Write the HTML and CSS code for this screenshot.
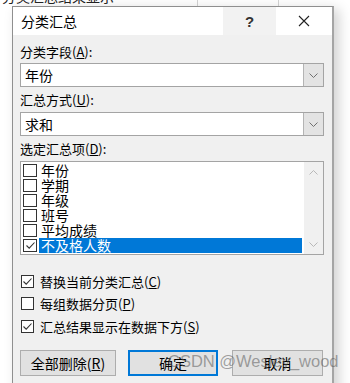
FILE: index.html
```html
<!DOCTYPE html>
<html lang="zh">
<head>
    <meta charset="UTF-8">
    <meta name="viewport" content="width=device-width, initial-scale=1.0">
    <title>分类汇总</title>
    <link rel="stylesheet" href="styles.css">
</head>
<body>
    <div class="sheet-top"><span class="cut-text">分类汇总结果显示</span></div>
    <div class="dialog">
        <div class="titlebar">
            <span class="title">分类汇总</span>
            <span class="title-btn help">?</span>
            <span class="title-btn close">
                <svg width="12" height="12" viewBox="0 0 12 12"><path d="M1 1 L11 11 M11 1 L1 11" stroke="#222" stroke-width="1.1" fill="none"/></svg>
            </span>
        </div>
        <div class="dialog-body">
            <div class="field-label">分类字段(<u>A</u>):</div>
            <div class="combo">
                <span class="combo-value">年份</span>
                <span class="combo-btn"><svg width="9" height="5" viewBox="0 0 9 5"><path d="M0.5 0.5 L4.5 4.5 L8.5 0.5" stroke="#707070" fill="none"/></svg></span>
            </div>

            <div class="field-label second">汇总方式(<u>U</u>):</div>
            <div class="combo">
                <span class="combo-value">求和</span>
                <span class="combo-btn"><svg width="9" height="5" viewBox="0 0 9 5"><path d="M0.5 0.5 L4.5 4.5 L8.5 0.5" stroke="#707070" fill="none"/></svg></span>
            </div>

            <div class="field-label second">选定汇总项(<u>D</u>):</div>
            <div class="listbox">
                <ul class="items">
                    <li class="item"><span class="box"></span><span class="item-text">年份</span></li>
                    <li class="item"><span class="box"></span><span class="item-text">学期</span></li>
                    <li class="item"><span class="box"></span><span class="item-text">年级</span></li>
                    <li class="item"><span class="box"></span><span class="item-text">班号</span></li>
                    <li class="item"><span class="box"></span><span class="item-text">平均成绩</span></li>
                    <li class="item selected">
                        <span class="box"><svg width="11" height="11" viewBox="0 0 11 11"><path d="M1.5 5.5 L4.2 8.2 L9.5 2.5" stroke="#333" stroke-width="1.1" fill="none"/></svg></span>
                        <span class="item-text">不及格人数</span>
                    </li>
                </ul>
                <div class="scrollbar">
                    <svg width="9" height="5" viewBox="0 0 9 5"><path d="M0.5 4.5 L4.5 0.5 L8.5 4.5" stroke="#b8b8b8" fill="none"/></svg>
                    <svg width="9" height="5" viewBox="0 0 9 5"><path d="M0.5 0.5 L4.5 4.5 L8.5 0.5" stroke="#b8b8b8" fill="none"/></svg>
                </div>
            </div>

            <div class="options">
                <label class="option">
                    <span class="box"><svg width="11" height="11" viewBox="0 0 11 11"><path d="M1.5 5.5 L4.2 8.2 L9.5 2.5" stroke="#333" stroke-width="1.1" fill="none"/></svg></span>
                    <span>替换当前分类汇总(<u>C</u>)</span>
                </label>
                <label class="option">
                    <span class="box"></span>
                    <span>每组数据分页(<u>P</u>)</span>
                </label>
                <label class="option">
                    <span class="box"><svg width="11" height="11" viewBox="0 0 11 11"><path d="M1.5 5.5 L4.2 8.2 L9.5 2.5" stroke="#333" stroke-width="1.1" fill="none"/></svg></span>
                    <span>汇总结果显示在数据下方(<u>S</u>)</span>
                </label>
            </div>

            <div class="buttons">
                <button class="btn remove">全部删除(<u>R</u>)</button>
                <button class="btn ok">确定</button>
                <button class="btn cancel">取消</button>
            </div>
        </div>
    </div>
    <div class="watermark">CSDN @Wesley_wood</div>
</body>
</html>
```

FILE: styles.css
```css
html, body {
    margin: 0;
    height: 100%;
    overflow: hidden;
}

body {
    position: relative;
    font-family: "Noto Sans CJK SC", "Liberation Sans", sans-serif;
    color: #000;
    background-color: #fff;
    background-image: repeating-linear-gradient(to bottom, transparent 0, transparent 23px, #dcdcdc 23px, #dcdcdc 24px, transparent 24px, transparent 20px);
    background-size: 100% 20px;
    background-position: 0 3px;
}

.sheet-top {
    height: 6px;
    overflow: hidden;
    background: #fff;
    background-image: linear-gradient(#d4d4d4, #d4d4d4), linear-gradient(#d4d4d4, #d4d4d4);
    background-size: 1px 6px, 1px 6px;
    background-position: 197px 0, 278px 0;
    background-repeat: no-repeat;
}

.cut-text {
    display: block;
    margin-top: -13px;
    padding-left: 2px;
    font-size: 14px;
    line-height: 18px;
    color: #222;
}

.dialog {
    width: 319px;
    margin-left: 12px;
    height: 400px;
    background: #f0f0f0;
    border: 1px solid #8f8f8f;
    border-right: 2px solid #a5a5a5;
    box-shadow: 5px 3px 12px rgba(0, 0, 0, 0.18);
}

.titlebar {
    display: flex;
    height: 28px;
    background: #fff;
    align-items: stretch;
}

.title {
    flex: 1;
    padding-left: 8px;
    font-size: 14px;
    line-height: 29px;
}

.title-btn {
    display: flex;
    align-items: center;
    justify-content: center;
}

.help {
    width: 53px;
    background: #f2f2f2;
    font-family: "Liberation Sans", sans-serif;
    font-size: 15px;
    font-weight: bold;
    color: #333;
}

.close {
    width: 56px;
}

.dialog-body {
    padding: 8px 8px 0 7px;
}

.field-label {
    height: 18px;
    line-height: 18px;
    font-size: 13px;
    margin-bottom: 2px;
}

.field-label.second {
    margin-top: 4px;
    margin-bottom: 3px;
}

.combo {
    display: flex;
    height: 24px;
    box-sizing: border-box;
    border: 1px solid #a4a4a4;
    background: #fff;
}

.combo-value {
    flex: 1;
    padding-left: 4px;
    font-size: 14px;
    line-height: 22px;
}

.combo-btn {
    width: 19px;
    display: flex;
    align-items: center;
    justify-content: center;
    background: #e3e3e3;
    border-left: 1px solid #b4b4b4;
}

.listbox {
    display: flex;
    height: 94px;
    box-sizing: border-box;
    border: 1px solid #a4a4a4;
    background: #fff;
}

.items {
    flex: 1;
    list-style: none;
    margin: 0;
    padding: 1px 2px 0 2px;
}

.item {
    display: flex;
    align-items: center;
    height: 15px;
    font-size: 14px;
}

.box {
    width: 13px;
    height: 13px;
    box-sizing: border-box;
    border: 1px solid #333;
    background: #fff;
    display: flex;
    align-items: center;
    justify-content: center;
    flex-shrink: 0;
}

.item .box {
    width: 14px;
    height: 13px;
}

.item-text {
    margin-left: 2px;
    padding-left: 2px;
    line-height: 15px;
}

.item.selected .item-text {
    flex: 1;
    background: #0078d7;
    color: #fff;
}

.scrollbar {
    width: 19px;
    background: #f0f0f0;
    display: flex;
    flex-direction: column;
    align-items: center;
    justify-content: space-between;
    padding: 8px 0 7px;
}

.options {
    margin-top: 17px;
    display: flex;
    flex-direction: column;
    gap: 4px;
}

.option {
    display: flex;
    align-items: center;
    gap: 6px;
    height: 18px;
    padding-left: 1px;
    font-size: 13px;
}

.option + .option + .option {
    margin-top: 1px;
}

.buttons {
    display: flex;
    margin-top: 15px;
}

.btn {
    height: 26px;
    box-sizing: border-box;
    background: #e1e1e1;
    border: 1px solid #adadad;
    font-family: "Noto Sans CJK SC", "Liberation Sans", sans-serif;
    font-size: 14px;
    padding: 0;
    color: #000;
}

.remove {
    width: 96px;
}

.ok {
    width: 90px;
    margin-left: 12px;
    border: 2px solid #0078d7;
}

.cancel {
    width: 91px;
    margin-left: 14px;
}

.watermark {
    position: absolute;
    left: 168px;
    top: 352px;
    font-family: "Liberation Sans", sans-serif;
    font-size: 16.5px;
    color: rgba(90, 90, 90, 0.55);
    white-space: nowrap;
}
```
